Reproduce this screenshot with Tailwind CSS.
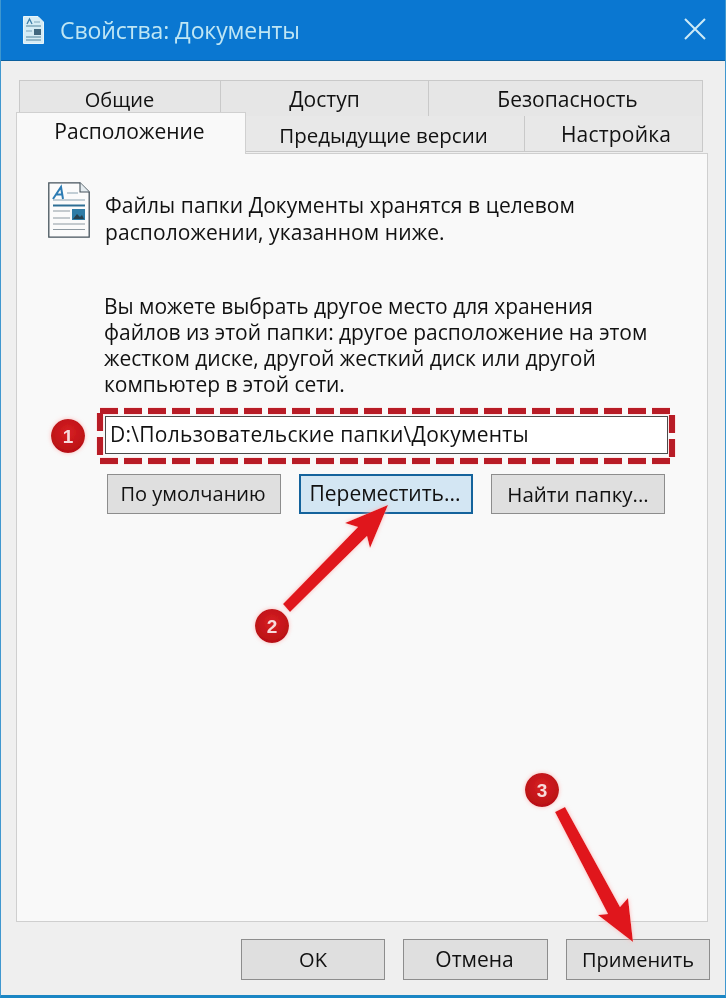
<!DOCTYPE html>
<html lang="ru">
<head>
<meta charset="utf-8">
<script src="https://cdn.jsdelivr.net/npm/@tailwindcss/browser@4"></script>
</head>
<body class="m-0 bg-[#efefef]">
<div class="relative w-[726px] h-[998px] overflow-hidden flex flex-col font-['Open_Sans','Noto_Sans',sans-serif] text-[21px] text-[#111111] bg-[#efefef] border-x border-x-[#3f97cf] border-b-[3px] border-b-[#1b86c4] blur-[0.4px]">
  <!-- title bar -->
  <header class="h-[61px] shrink-0 -mx-px bg-[#0a77d1] flex items-center pl-[23px] pr-[20px] border-b border-[#0b5f9e]">
    <svg class="w-[21px] h-[28px] shrink-0" viewBox="0 0 21 28"><path d="M0.500 0.500H15L20.500 6V27.500H0.500Z" fill="#d6ecf5" stroke="#e8f5fa"/><path d="M3 10h15M3 21h15M3 24h15" stroke="#7fa6bb" stroke-width="1.300"/><path d="M4 8l2.500-5 2.500 5" fill="none" stroke="#3f7ea8" stroke-width="1.300"/><path d="M11 6h6" stroke="#7fa6bb"/><rect x="11" y="13" width="7" height="6" fill="#41677f"/><path d="M3 15h6" stroke="#7fa6bb"/></svg>
    <span class="ml-[16px] text-[23px] leading-none text-[#bfe6f4] tracking-[-0.1px]">Свойства: Документы</span>
    <svg class="ml-auto w-[22px] h-[22px] -mt-[2px]" viewBox="0 0 22 22"><path d="M1 1L21 21M21 1L1 21" stroke="#cdeaf6" stroke-width="2" fill="none"/></svg>
  </header>

  <div class="flex-1 min-h-0 flex flex-col pl-[15px] pr-[17px] pt-[19px]">
    <!-- tabs -->
    <div class="h-[73px] shrink-0 relative">
      <div class="flex h-[37px] ml-[3px] mr-[5px]">
        <div class="w-[202px] bg-[#e6e6e6] border border-[#c9c9c9] flex items-center justify-center pt-[2px] pr-[1px] text-[20px]">Общие</div>
        <div class="w-[208px] bg-[#e6e6e6] border-y border-r border-[#c9c9c9] flex items-center justify-center pt-[2px]">Доступ</div>
        <div class="flex-1 bg-[#e6e6e6] border-y border-r border-[#c9c9c9] flex items-center justify-center pt-[2px] pl-[4px]">Безопасность</div>
      </div>
      <div class="flex h-[36px] pl-[229px] mr-[5px] -mt-px">
        <div class="w-[280px] bg-[#e8e8e8] border-b border-r border-[#c9c9c9] flex items-center justify-center pt-[3px] pr-[2px] text-[20.500px]">Предыдущие версии</div>
        <div class="flex-1 bg-[#e8e8e8] border-b border-r border-[#c9c9c9] flex items-center justify-center pt-[3px] pl-[5px] tracking-[0.2px]">Настройка</div>
      </div>
      <div class="absolute left-0 top-[32px] z-10 w-[230px] h-[42px] bg-[#f9f9f9] border-x border-t border-[#d0d0d0] flex items-center justify-center pb-[4px] pr-[3px]">Расположение</div>
    </div>

    <!-- panel -->
    <section class="h-[769px] shrink-0 bg-[#f9f9f9] border border-[#cfcfcf] pt-[28px] pl-[31px] pr-[38px]">
      <div class="flex gap-[15px]">
        <svg class="w-[42px] h-[56px] shrink-0" viewBox="0 0 42 56"><path d="M0.800 0.800H32L41.200 10V55.200H0.800Z" fill="#fbfbfb" stroke="#46535c" stroke-width="1.300"/><path d="M32 0.800V10H41.200" fill="#e5ecf0" stroke="#46535c" stroke-width="1.100"/><path d="M5 17L13 5L15 17M8 12.500h7" stroke="#2d7cb4" stroke-width="2" fill="none"/><path d="M19 11h11M5 18h32" stroke="#8aa2b0" stroke-width="1.200"/><path d="M5 23.500h32" stroke="#2d6e94" stroke-width="2"/><path d="M5 29h17M5 36h17M5 42h32M5 47.500h32" stroke="#8e9aa2" stroke-width="1.200"/><rect x="24" y="27" width="13" height="11" fill="#2e7ca6"/><path d="M25 37l4-5 3 3 2-2 2 4z" fill="#27414f"/></svg>
        <p class="m-0 leading-[26.500px] pt-[11px] -mt-[1px] whitespace-nowrap tracking-[0.08px]">Файлы папки Документы хранятся в целевом<br>расположении, указанном ниже.</p>
      </div>
      <p class="m-0 mt-[48px] ml-[56px] leading-[26px] whitespace-nowrap tracking-[-0.03px]">Вы можете выбрать другое место для хранения<br>файлов из этой папки: другое расположение на этом<br>жестком диске, другой жесткий диск или другой<br>компьютер в этой сети.</p>
      <div class="mt-[19px] ml-[57px] w-[563px] h-[38px] bg-white border-[1.500px] border-[#4a4a4a] flex items-center pl-[4px] tracking-[0.27px] whitespace-nowrap">D:\Пользовательские папки\Документы</div>
      <div class="mt-[20px] ml-[59px] flex gap-[18px]">
        <button class="w-[174px] h-[40px] bg-[#dfdfdf] border-[1.500px] border-[#8d8d8d] text-[20px] pr-[2px]">По умолчанию</button>
        <button class="w-[174px] h-[40px] bg-[#d3e6f3] border-[2.500px] border-[#14639c] pr-[2px]">Переместить...</button>
        <button class="w-[174px] h-[40px] bg-[#dfdfdf] border-[1.500px] border-[#8d8d8d] text-[20.500px]">Найти папку...</button>
      </div>
    </section>

    <!-- footer buttons -->
    <div class="flex justify-end gap-[18px] pt-[17px] -mr-[2px] text-[20px]">
      <button class="w-[144px] h-[41px] bg-[#dfdfdf] border-[1.500px] border-[#8d8d8d]">OK</button>
      <button class="w-[145px] h-[41px] bg-[#dfdfdf] border-[1.500px] border-[#8d8d8d] text-[21px] pr-[2px]">Отмена</button>
      <button class="w-[144px] h-[41px] bg-[#dfdfdf] border-[1.500px] border-[#8d8d8d]">Применить</button>
    </div>
  </div>

  <!-- annotation overlay -->
  <svg class="absolute -left-px top-0 w-[726px] h-[998px] pointer-events-none" viewBox="0 0 726 998">
    <defs>
      <filter id="glow" x="-30%" y="-30%" width="160%" height="160%"><feDropShadow dx="0" dy="0" stdDeviation="2" flood-color="#ffb0b0" flood-opacity="0.9"/></filter>
      <radialGradient id="badge" cx="50%" cy="40%" r="60%"><stop offset="0" stop-color="#d82024"/><stop offset="1" stop-color="#b80f14"/></radialGradient>
    </defs>
    <rect x="100" y="411" width="572" height="50" fill="none" stroke="#ffd9d9" stroke-width="8" stroke-dasharray="18 6" stroke-opacity="0.55"/>
    <rect x="100" y="411" width="572" height="50" fill="none" stroke="#b81c26" stroke-width="6" stroke-dasharray="18 6"/>
    <path d="M283 604L290 612L367 536L370 548L388 505L345 523L358 527Z" fill="#e0141a" filter="url(#glow)"/>
    <path d="M555 812L565 807L620 907L628 898L633 942L598 915L608 914Z" fill="#e0141a" filter="url(#glow)"/>
    <g filter="url(#glow)">
      <circle cx="68" cy="436" r="17" fill="url(#badge)"/>
      <circle cx="272" cy="626" r="17" fill="url(#badge)"/>
      <circle cx="542" cy="790" r="17" fill="url(#badge)"/>
    </g>
    <g font-family="'Liberation Sans',sans-serif" font-weight="700" font-size="19" fill="#f6dcdc" text-anchor="middle">
      <text x="68" y="443">1</text>
      <text x="272" y="633">2</text>
      <text x="542" y="797">3</text>
    </g>
  </svg>
</div>
</body>
</html>
